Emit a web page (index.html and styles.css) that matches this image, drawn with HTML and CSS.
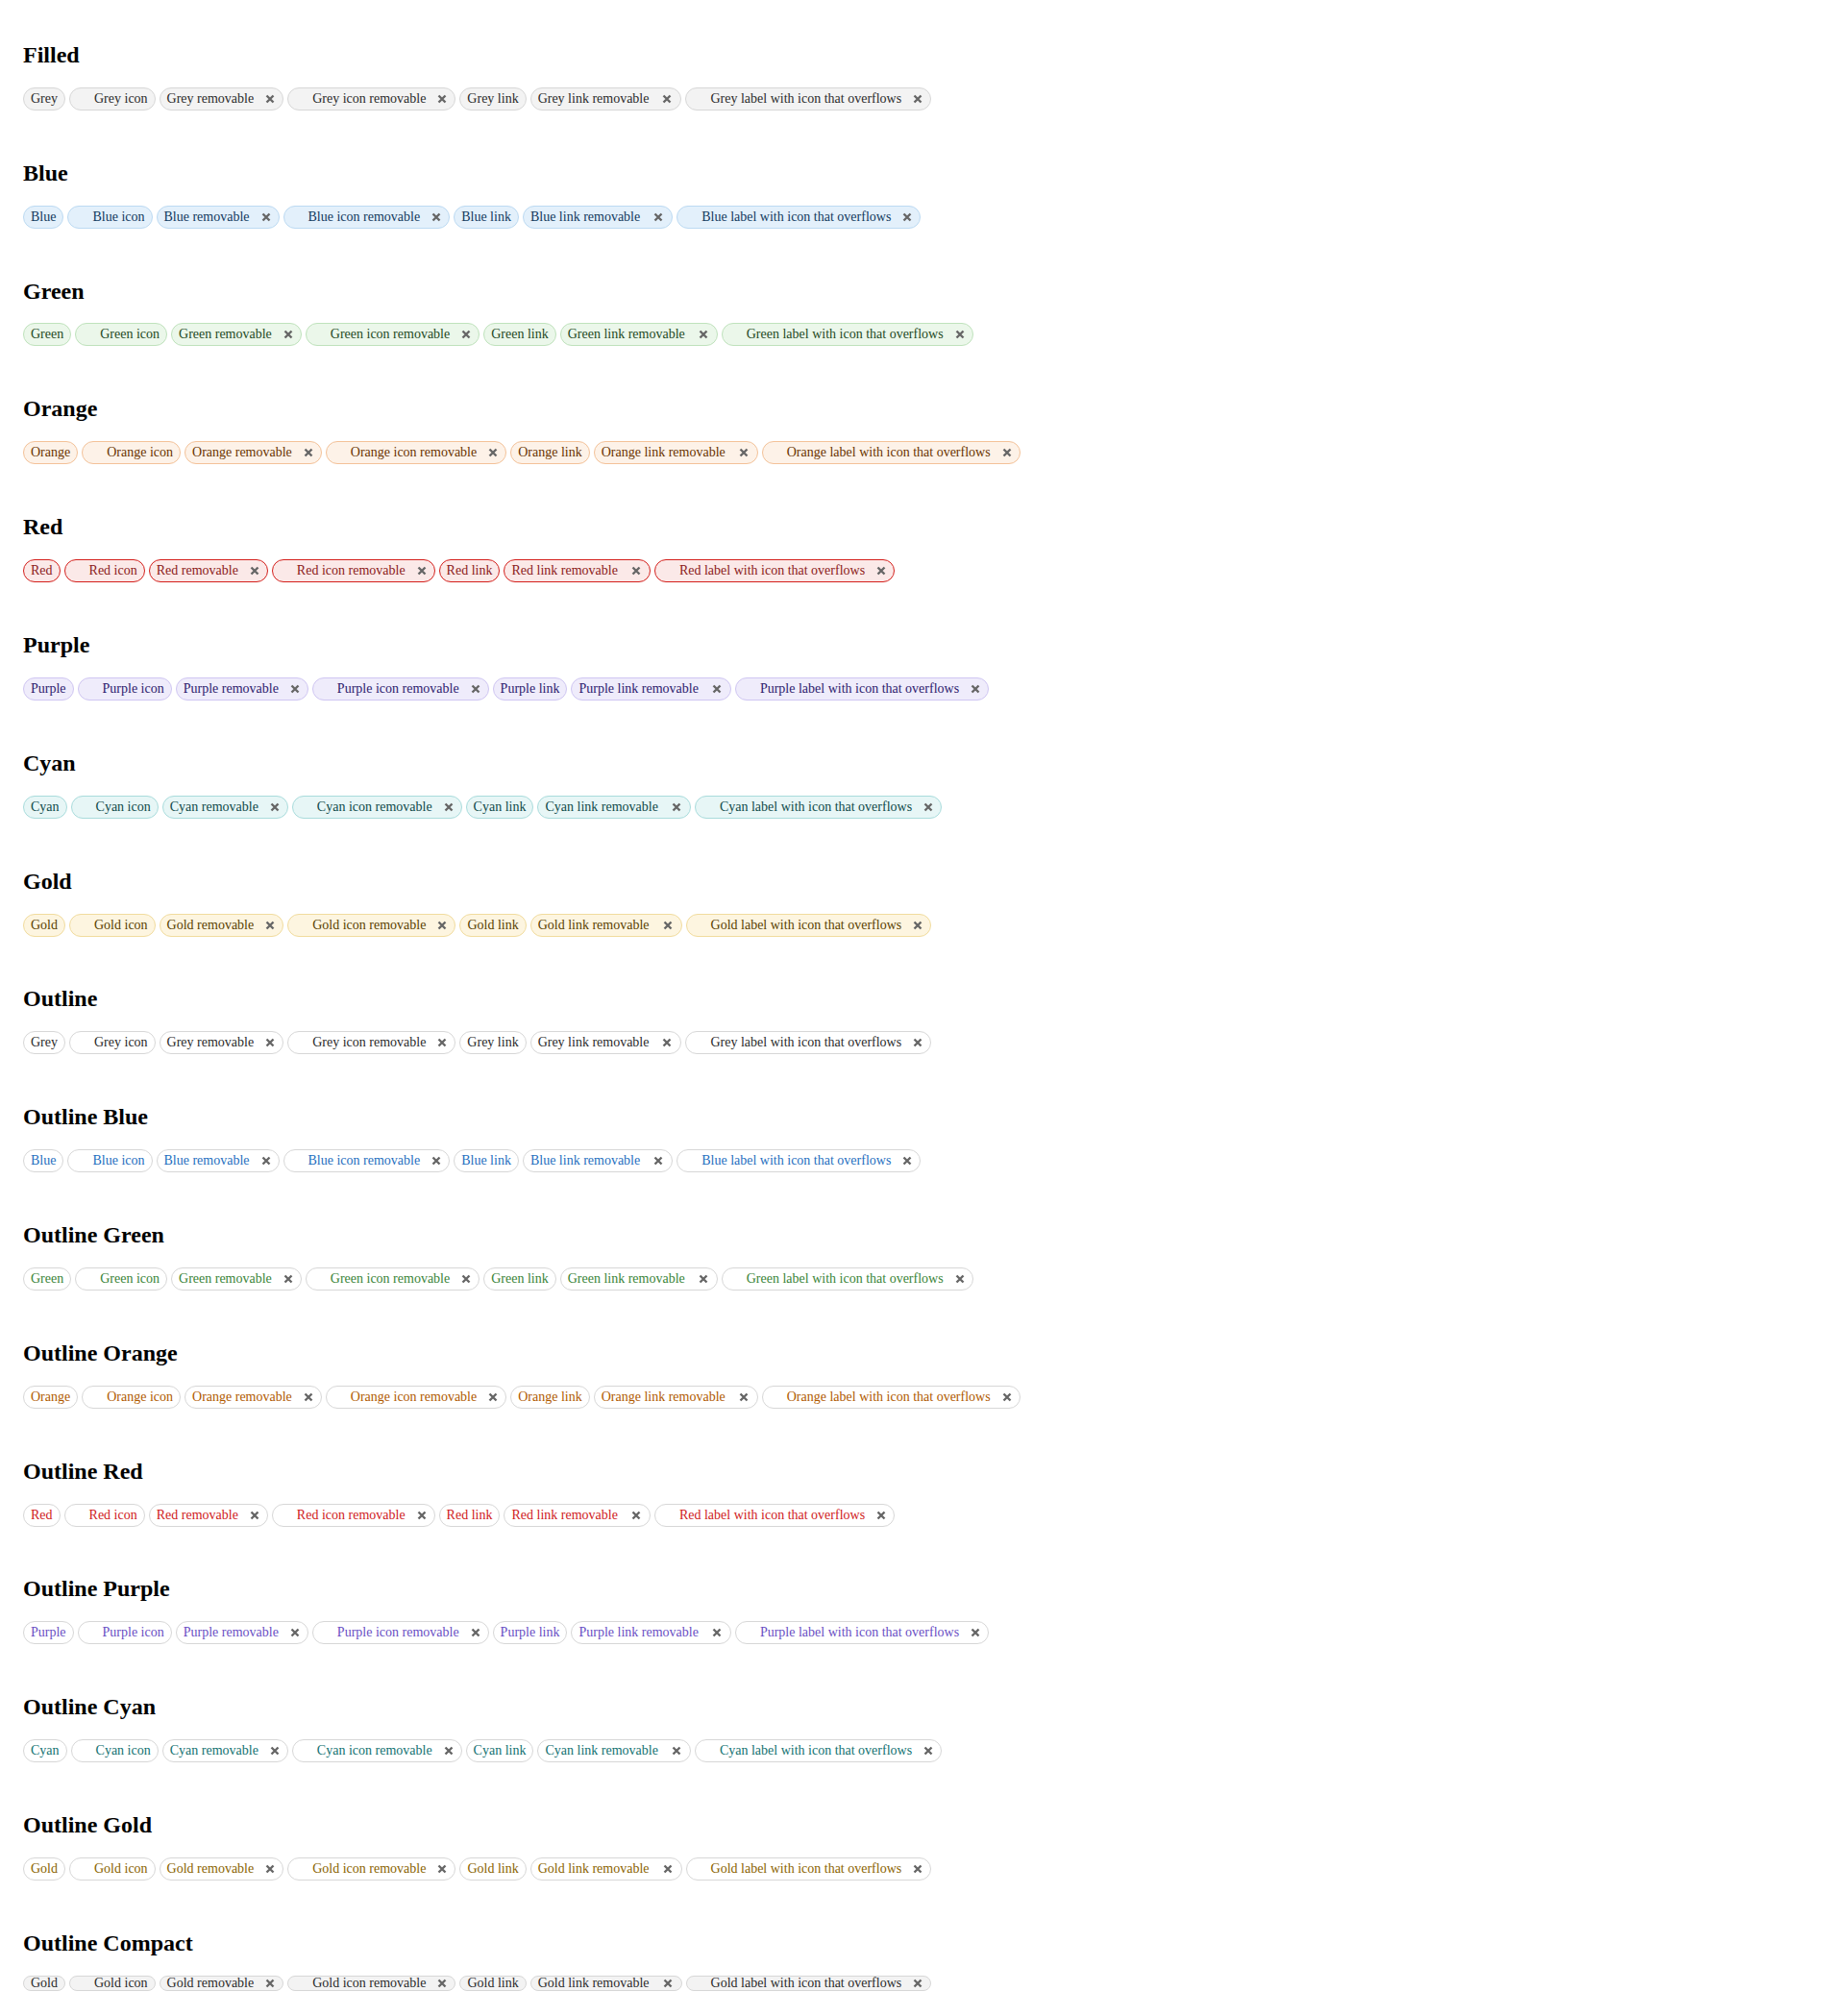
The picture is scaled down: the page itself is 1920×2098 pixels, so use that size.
FILE: index.html
```html
<!DOCTYPE html>
<html lang="en">
<head>
<meta charset="utf-8">
<title>Tags</title>
<link rel="stylesheet" href="styles.css">
</head>
<body>
<div class="page">

<section class="section">
<h2>Filled</h2>
<div class="tags">
<span class="tag grey"><span class="tag-label">Grey</span></span>
<span class="tag grey"><span class="tag-icon"></span><span class="tag-label">Grey icon</span></span>
<span class="tag grey"><span class="tag-label">Grey removable</span><button class="tag-close"><svg viewBox="0 0 10 10" width="10" height="10"><path d="M1.5 1.5L8.5 8.5M8.5 1.5L1.5 8.5"/></svg></button></span>
<span class="tag grey"><span class="tag-icon"></span><span class="tag-label">Grey icon removable</span><button class="tag-close"><svg viewBox="0 0 10 10" width="10" height="10"><path d="M1.5 1.5L8.5 8.5M8.5 1.5L1.5 8.5"/></svg></button></span>
<a class="tag grey" href="#"><span class="tag-label">Grey link</span></a>
<a class="tag grey link-rm" href="#"><span class="tag-label">Grey link removable</span><button class="tag-close"><svg viewBox="0 0 10 10" width="10" height="10"><path d="M1.5 1.5L8.5 8.5M8.5 1.5L1.5 8.5"/></svg></button></a>
<span class="tag grey"><span class="tag-icon"></span><span class="tag-label">Grey label with icon that overflows</span><button class="tag-close"><svg viewBox="0 0 10 10" width="10" height="10"><path d="M1.5 1.5L8.5 8.5M8.5 1.5L1.5 8.5"/></svg></button></span>
</div>
</section>

<section class="section">
<h2>Blue</h2>
<div class="tags">
<span class="tag blue"><span class="tag-label">Blue</span></span>
<span class="tag blue"><span class="tag-icon"></span><span class="tag-label">Blue icon</span></span>
<span class="tag blue"><span class="tag-label">Blue removable</span><button class="tag-close"><svg viewBox="0 0 10 10" width="10" height="10"><path d="M1.5 1.5L8.5 8.5M8.5 1.5L1.5 8.5"/></svg></button></span>
<span class="tag blue"><span class="tag-icon"></span><span class="tag-label">Blue icon removable</span><button class="tag-close"><svg viewBox="0 0 10 10" width="10" height="10"><path d="M1.5 1.5L8.5 8.5M8.5 1.5L1.5 8.5"/></svg></button></span>
<a class="tag blue" href="#"><span class="tag-label">Blue link</span></a>
<a class="tag blue link-rm" href="#"><span class="tag-label">Blue link removable</span><button class="tag-close"><svg viewBox="0 0 10 10" width="10" height="10"><path d="M1.5 1.5L8.5 8.5M8.5 1.5L1.5 8.5"/></svg></button></a>
<span class="tag blue"><span class="tag-icon"></span><span class="tag-label">Blue label with icon that overflows</span><button class="tag-close"><svg viewBox="0 0 10 10" width="10" height="10"><path d="M1.5 1.5L8.5 8.5M8.5 1.5L1.5 8.5"/></svg></button></span>
</div>
</section>

<section class="section">
<h2>Green</h2>
<div class="tags">
<span class="tag green"><span class="tag-label">Green</span></span>
<span class="tag green"><span class="tag-icon"></span><span class="tag-label">Green icon</span></span>
<span class="tag green"><span class="tag-label">Green removable</span><button class="tag-close"><svg viewBox="0 0 10 10" width="10" height="10"><path d="M1.5 1.5L8.5 8.5M8.5 1.5L1.5 8.5"/></svg></button></span>
<span class="tag green"><span class="tag-icon"></span><span class="tag-label">Green icon removable</span><button class="tag-close"><svg viewBox="0 0 10 10" width="10" height="10"><path d="M1.5 1.5L8.5 8.5M8.5 1.5L1.5 8.5"/></svg></button></span>
<a class="tag green" href="#"><span class="tag-label">Green link</span></a>
<a class="tag green link-rm" href="#"><span class="tag-label">Green link removable</span><button class="tag-close"><svg viewBox="0 0 10 10" width="10" height="10"><path d="M1.5 1.5L8.5 8.5M8.5 1.5L1.5 8.5"/></svg></button></a>
<span class="tag green"><span class="tag-icon"></span><span class="tag-label">Green label with icon that overflows</span><button class="tag-close"><svg viewBox="0 0 10 10" width="10" height="10"><path d="M1.5 1.5L8.5 8.5M8.5 1.5L1.5 8.5"/></svg></button></span>
</div>
</section>

<section class="section">
<h2>Orange</h2>
<div class="tags">
<span class="tag orange"><span class="tag-label">Orange</span></span>
<span class="tag orange"><span class="tag-icon"></span><span class="tag-label">Orange icon</span></span>
<span class="tag orange"><span class="tag-label">Orange removable</span><button class="tag-close"><svg viewBox="0 0 10 10" width="10" height="10"><path d="M1.5 1.5L8.5 8.5M8.5 1.5L1.5 8.5"/></svg></button></span>
<span class="tag orange"><span class="tag-icon"></span><span class="tag-label">Orange icon removable</span><button class="tag-close"><svg viewBox="0 0 10 10" width="10" height="10"><path d="M1.5 1.5L8.5 8.5M8.5 1.5L1.5 8.5"/></svg></button></span>
<a class="tag orange" href="#"><span class="tag-label">Orange link</span></a>
<a class="tag orange link-rm" href="#"><span class="tag-label">Orange link removable</span><button class="tag-close"><svg viewBox="0 0 10 10" width="10" height="10"><path d="M1.5 1.5L8.5 8.5M8.5 1.5L1.5 8.5"/></svg></button></a>
<span class="tag orange"><span class="tag-icon"></span><span class="tag-label">Orange label with icon that overflows</span><button class="tag-close"><svg viewBox="0 0 10 10" width="10" height="10"><path d="M1.5 1.5L8.5 8.5M8.5 1.5L1.5 8.5"/></svg></button></span>
</div>
</section>

<section class="section">
<h2>Red</h2>
<div class="tags">
<span class="tag red"><span class="tag-label">Red</span></span>
<span class="tag red"><span class="tag-icon"></span><span class="tag-label">Red icon</span></span>
<span class="tag red"><span class="tag-label">Red removable</span><button class="tag-close"><svg viewBox="0 0 10 10" width="10" height="10"><path d="M1.5 1.5L8.5 8.5M8.5 1.5L1.5 8.5"/></svg></button></span>
<span class="tag red"><span class="tag-icon"></span><span class="tag-label">Red icon removable</span><button class="tag-close"><svg viewBox="0 0 10 10" width="10" height="10"><path d="M1.5 1.5L8.5 8.5M8.5 1.5L1.5 8.5"/></svg></button></span>
<a class="tag red" href="#"><span class="tag-label">Red link</span></a>
<a class="tag red link-rm" href="#"><span class="tag-label">Red link removable</span><button class="tag-close"><svg viewBox="0 0 10 10" width="10" height="10"><path d="M1.5 1.5L8.5 8.5M8.5 1.5L1.5 8.5"/></svg></button></a>
<span class="tag red"><span class="tag-icon"></span><span class="tag-label">Red label with icon that overflows</span><button class="tag-close"><svg viewBox="0 0 10 10" width="10" height="10"><path d="M1.5 1.5L8.5 8.5M8.5 1.5L1.5 8.5"/></svg></button></span>
</div>
</section>

<section class="section">
<h2>Purple</h2>
<div class="tags">
<span class="tag purple"><span class="tag-label">Purple</span></span>
<span class="tag purple"><span class="tag-icon"></span><span class="tag-label">Purple icon</span></span>
<span class="tag purple"><span class="tag-label">Purple removable</span><button class="tag-close"><svg viewBox="0 0 10 10" width="10" height="10"><path d="M1.5 1.5L8.5 8.5M8.5 1.5L1.5 8.5"/></svg></button></span>
<span class="tag purple"><span class="tag-icon"></span><span class="tag-label">Purple icon removable</span><button class="tag-close"><svg viewBox="0 0 10 10" width="10" height="10"><path d="M1.5 1.5L8.5 8.5M8.5 1.5L1.5 8.5"/></svg></button></span>
<a class="tag purple" href="#"><span class="tag-label">Purple link</span></a>
<a class="tag purple link-rm" href="#"><span class="tag-label">Purple link removable</span><button class="tag-close"><svg viewBox="0 0 10 10" width="10" height="10"><path d="M1.5 1.5L8.5 8.5M8.5 1.5L1.5 8.5"/></svg></button></a>
<span class="tag purple"><span class="tag-icon"></span><span class="tag-label">Purple label with icon that overflows</span><button class="tag-close"><svg viewBox="0 0 10 10" width="10" height="10"><path d="M1.5 1.5L8.5 8.5M8.5 1.5L1.5 8.5"/></svg></button></span>
</div>
</section>

<section class="section">
<h2>Cyan</h2>
<div class="tags">
<span class="tag cyan"><span class="tag-label">Cyan</span></span>
<span class="tag cyan"><span class="tag-icon"></span><span class="tag-label">Cyan icon</span></span>
<span class="tag cyan"><span class="tag-label">Cyan removable</span><button class="tag-close"><svg viewBox="0 0 10 10" width="10" height="10"><path d="M1.5 1.5L8.5 8.5M8.5 1.5L1.5 8.5"/></svg></button></span>
<span class="tag cyan"><span class="tag-icon"></span><span class="tag-label">Cyan icon removable</span><button class="tag-close"><svg viewBox="0 0 10 10" width="10" height="10"><path d="M1.5 1.5L8.5 8.5M8.5 1.5L1.5 8.5"/></svg></button></span>
<a class="tag cyan" href="#"><span class="tag-label">Cyan link</span></a>
<a class="tag cyan link-rm" href="#"><span class="tag-label">Cyan link removable</span><button class="tag-close"><svg viewBox="0 0 10 10" width="10" height="10"><path d="M1.5 1.5L8.5 8.5M8.5 1.5L1.5 8.5"/></svg></button></a>
<span class="tag cyan"><span class="tag-icon"></span><span class="tag-label">Cyan label with icon that overflows</span><button class="tag-close"><svg viewBox="0 0 10 10" width="10" height="10"><path d="M1.5 1.5L8.5 8.5M8.5 1.5L1.5 8.5"/></svg></button></span>
</div>
</section>

<section class="section">
<h2>Gold</h2>
<div class="tags">
<span class="tag gold"><span class="tag-label">Gold</span></span>
<span class="tag gold"><span class="tag-icon"></span><span class="tag-label">Gold icon</span></span>
<span class="tag gold"><span class="tag-label">Gold removable</span><button class="tag-close"><svg viewBox="0 0 10 10" width="10" height="10"><path d="M1.5 1.5L8.5 8.5M8.5 1.5L1.5 8.5"/></svg></button></span>
<span class="tag gold"><span class="tag-icon"></span><span class="tag-label">Gold icon removable</span><button class="tag-close"><svg viewBox="0 0 10 10" width="10" height="10"><path d="M1.5 1.5L8.5 8.5M8.5 1.5L1.5 8.5"/></svg></button></span>
<a class="tag gold" href="#"><span class="tag-label">Gold link</span></a>
<a class="tag gold link-rm" href="#"><span class="tag-label">Gold link removable</span><button class="tag-close"><svg viewBox="0 0 10 10" width="10" height="10"><path d="M1.5 1.5L8.5 8.5M8.5 1.5L1.5 8.5"/></svg></button></a>
<span class="tag gold"><span class="tag-icon"></span><span class="tag-label">Gold label with icon that overflows</span><button class="tag-close"><svg viewBox="0 0 10 10" width="10" height="10"><path d="M1.5 1.5L8.5 8.5M8.5 1.5L1.5 8.5"/></svg></button></span>
</div>
</section>

<section class="section">
<h2>Outline</h2>
<div class="tags">
<span class="tag outline o-grey"><span class="tag-label">Grey</span></span>
<span class="tag outline o-grey"><span class="tag-icon"></span><span class="tag-label">Grey icon</span></span>
<span class="tag outline o-grey"><span class="tag-label">Grey removable</span><button class="tag-close"><svg viewBox="0 0 10 10" width="10" height="10"><path d="M1.5 1.5L8.5 8.5M8.5 1.5L1.5 8.5"/></svg></button></span>
<span class="tag outline o-grey"><span class="tag-icon"></span><span class="tag-label">Grey icon removable</span><button class="tag-close"><svg viewBox="0 0 10 10" width="10" height="10"><path d="M1.5 1.5L8.5 8.5M8.5 1.5L1.5 8.5"/></svg></button></span>
<a class="tag outline o-grey" href="#"><span class="tag-label">Grey link</span></a>
<a class="tag outline o-grey link-rm" href="#"><span class="tag-label">Grey link removable</span><button class="tag-close"><svg viewBox="0 0 10 10" width="10" height="10"><path d="M1.5 1.5L8.5 8.5M8.5 1.5L1.5 8.5"/></svg></button></a>
<span class="tag outline o-grey"><span class="tag-icon"></span><span class="tag-label">Grey label with icon that overflows</span><button class="tag-close"><svg viewBox="0 0 10 10" width="10" height="10"><path d="M1.5 1.5L8.5 8.5M8.5 1.5L1.5 8.5"/></svg></button></span>
</div>
</section>

<section class="section">
<h2>Outline Blue</h2>
<div class="tags">
<span class="tag outline o-blue"><span class="tag-label">Blue</span></span>
<span class="tag outline o-blue"><span class="tag-icon"></span><span class="tag-label">Blue icon</span></span>
<span class="tag outline o-blue"><span class="tag-label">Blue removable</span><button class="tag-close"><svg viewBox="0 0 10 10" width="10" height="10"><path d="M1.5 1.5L8.5 8.5M8.5 1.5L1.5 8.5"/></svg></button></span>
<span class="tag outline o-blue"><span class="tag-icon"></span><span class="tag-label">Blue icon removable</span><button class="tag-close"><svg viewBox="0 0 10 10" width="10" height="10"><path d="M1.5 1.5L8.5 8.5M8.5 1.5L1.5 8.5"/></svg></button></span>
<a class="tag outline o-blue" href="#"><span class="tag-label">Blue link</span></a>
<a class="tag outline o-blue link-rm" href="#"><span class="tag-label">Blue link removable</span><button class="tag-close"><svg viewBox="0 0 10 10" width="10" height="10"><path d="M1.5 1.5L8.5 8.5M8.5 1.5L1.5 8.5"/></svg></button></a>
<span class="tag outline o-blue"><span class="tag-icon"></span><span class="tag-label">Blue label with icon that overflows</span><button class="tag-close"><svg viewBox="0 0 10 10" width="10" height="10"><path d="M1.5 1.5L8.5 8.5M8.5 1.5L1.5 8.5"/></svg></button></span>
</div>
</section>

<section class="section">
<h2>Outline Green</h2>
<div class="tags">
<span class="tag outline o-green"><span class="tag-label">Green</span></span>
<span class="tag outline o-green"><span class="tag-icon"></span><span class="tag-label">Green icon</span></span>
<span class="tag outline o-green"><span class="tag-label">Green removable</span><button class="tag-close"><svg viewBox="0 0 10 10" width="10" height="10"><path d="M1.5 1.5L8.5 8.5M8.5 1.5L1.5 8.5"/></svg></button></span>
<span class="tag outline o-green"><span class="tag-icon"></span><span class="tag-label">Green icon removable</span><button class="tag-close"><svg viewBox="0 0 10 10" width="10" height="10"><path d="M1.5 1.5L8.5 8.5M8.5 1.5L1.5 8.5"/></svg></button></span>
<a class="tag outline o-green" href="#"><span class="tag-label">Green link</span></a>
<a class="tag outline o-green link-rm" href="#"><span class="tag-label">Green link removable</span><button class="tag-close"><svg viewBox="0 0 10 10" width="10" height="10"><path d="M1.5 1.5L8.5 8.5M8.5 1.5L1.5 8.5"/></svg></button></a>
<span class="tag outline o-green"><span class="tag-icon"></span><span class="tag-label">Green label with icon that overflows</span><button class="tag-close"><svg viewBox="0 0 10 10" width="10" height="10"><path d="M1.5 1.5L8.5 8.5M8.5 1.5L1.5 8.5"/></svg></button></span>
</div>
</section>

<section class="section">
<h2>Outline Orange</h2>
<div class="tags">
<span class="tag outline o-orange"><span class="tag-label">Orange</span></span>
<span class="tag outline o-orange"><span class="tag-icon"></span><span class="tag-label">Orange icon</span></span>
<span class="tag outline o-orange"><span class="tag-label">Orange removable</span><button class="tag-close"><svg viewBox="0 0 10 10" width="10" height="10"><path d="M1.5 1.5L8.5 8.5M8.5 1.5L1.5 8.5"/></svg></button></span>
<span class="tag outline o-orange"><span class="tag-icon"></span><span class="tag-label">Orange icon removable</span><button class="tag-close"><svg viewBox="0 0 10 10" width="10" height="10"><path d="M1.5 1.5L8.5 8.5M8.5 1.5L1.5 8.5"/></svg></button></span>
<a class="tag outline o-orange" href="#"><span class="tag-label">Orange link</span></a>
<a class="tag outline o-orange link-rm" href="#"><span class="tag-label">Orange link removable</span><button class="tag-close"><svg viewBox="0 0 10 10" width="10" height="10"><path d="M1.5 1.5L8.5 8.5M8.5 1.5L1.5 8.5"/></svg></button></a>
<span class="tag outline o-orange"><span class="tag-icon"></span><span class="tag-label">Orange label with icon that overflows</span><button class="tag-close"><svg viewBox="0 0 10 10" width="10" height="10"><path d="M1.5 1.5L8.5 8.5M8.5 1.5L1.5 8.5"/></svg></button></span>
</div>
</section>

<section class="section">
<h2>Outline Red</h2>
<div class="tags">
<span class="tag outline o-red"><span class="tag-label">Red</span></span>
<span class="tag outline o-red"><span class="tag-icon"></span><span class="tag-label">Red icon</span></span>
<span class="tag outline o-red"><span class="tag-label">Red removable</span><button class="tag-close"><svg viewBox="0 0 10 10" width="10" height="10"><path d="M1.5 1.5L8.5 8.5M8.5 1.5L1.5 8.5"/></svg></button></span>
<span class="tag outline o-red"><span class="tag-icon"></span><span class="tag-label">Red icon removable</span><button class="tag-close"><svg viewBox="0 0 10 10" width="10" height="10"><path d="M1.5 1.5L8.5 8.5M8.5 1.5L1.5 8.5"/></svg></button></span>
<a class="tag outline o-red" href="#"><span class="tag-label">Red link</span></a>
<a class="tag outline o-red link-rm" href="#"><span class="tag-label">Red link removable</span><button class="tag-close"><svg viewBox="0 0 10 10" width="10" height="10"><path d="M1.5 1.5L8.5 8.5M8.5 1.5L1.5 8.5"/></svg></button></a>
<span class="tag outline o-red"><span class="tag-icon"></span><span class="tag-label">Red label with icon that overflows</span><button class="tag-close"><svg viewBox="0 0 10 10" width="10" height="10"><path d="M1.5 1.5L8.5 8.5M8.5 1.5L1.5 8.5"/></svg></button></span>
</div>
</section>

<section class="section">
<h2>Outline Purple</h2>
<div class="tags">
<span class="tag outline o-purple"><span class="tag-label">Purple</span></span>
<span class="tag outline o-purple"><span class="tag-icon"></span><span class="tag-label">Purple icon</span></span>
<span class="tag outline o-purple"><span class="tag-label">Purple removable</span><button class="tag-close"><svg viewBox="0 0 10 10" width="10" height="10"><path d="M1.5 1.5L8.5 8.5M8.5 1.5L1.5 8.5"/></svg></button></span>
<span class="tag outline o-purple"><span class="tag-icon"></span><span class="tag-label">Purple icon removable</span><button class="tag-close"><svg viewBox="0 0 10 10" width="10" height="10"><path d="M1.5 1.5L8.5 8.5M8.5 1.5L1.5 8.5"/></svg></button></span>
<a class="tag outline o-purple" href="#"><span class="tag-label">Purple link</span></a>
<a class="tag outline o-purple link-rm" href="#"><span class="tag-label">Purple link removable</span><button class="tag-close"><svg viewBox="0 0 10 10" width="10" height="10"><path d="M1.5 1.5L8.5 8.5M8.5 1.5L1.5 8.5"/></svg></button></a>
<span class="tag outline o-purple"><span class="tag-icon"></span><span class="tag-label">Purple label with icon that overflows</span><button class="tag-close"><svg viewBox="0 0 10 10" width="10" height="10"><path d="M1.5 1.5L8.5 8.5M8.5 1.5L1.5 8.5"/></svg></button></span>
</div>
</section>

<section class="section">
<h2>Outline Cyan</h2>
<div class="tags">
<span class="tag outline o-cyan"><span class="tag-label">Cyan</span></span>
<span class="tag outline o-cyan"><span class="tag-icon"></span><span class="tag-label">Cyan icon</span></span>
<span class="tag outline o-cyan"><span class="tag-label">Cyan removable</span><button class="tag-close"><svg viewBox="0 0 10 10" width="10" height="10"><path d="M1.5 1.5L8.5 8.5M8.5 1.5L1.5 8.5"/></svg></button></span>
<span class="tag outline o-cyan"><span class="tag-icon"></span><span class="tag-label">Cyan icon removable</span><button class="tag-close"><svg viewBox="0 0 10 10" width="10" height="10"><path d="M1.5 1.5L8.5 8.5M8.5 1.5L1.5 8.5"/></svg></button></span>
<a class="tag outline o-cyan" href="#"><span class="tag-label">Cyan link</span></a>
<a class="tag outline o-cyan link-rm" href="#"><span class="tag-label">Cyan link removable</span><button class="tag-close"><svg viewBox="0 0 10 10" width="10" height="10"><path d="M1.5 1.5L8.5 8.5M8.5 1.5L1.5 8.5"/></svg></button></a>
<span class="tag outline o-cyan"><span class="tag-icon"></span><span class="tag-label">Cyan label with icon that overflows</span><button class="tag-close"><svg viewBox="0 0 10 10" width="10" height="10"><path d="M1.5 1.5L8.5 8.5M8.5 1.5L1.5 8.5"/></svg></button></span>
</div>
</section>

<section class="section">
<h2>Outline Gold</h2>
<div class="tags">
<span class="tag outline o-gold"><span class="tag-label">Gold</span></span>
<span class="tag outline o-gold"><span class="tag-icon"></span><span class="tag-label">Gold icon</span></span>
<span class="tag outline o-gold"><span class="tag-label">Gold removable</span><button class="tag-close"><svg viewBox="0 0 10 10" width="10" height="10"><path d="M1.5 1.5L8.5 8.5M8.5 1.5L1.5 8.5"/></svg></button></span>
<span class="tag outline o-gold"><span class="tag-icon"></span><span class="tag-label">Gold icon removable</span><button class="tag-close"><svg viewBox="0 0 10 10" width="10" height="10"><path d="M1.5 1.5L8.5 8.5M8.5 1.5L1.5 8.5"/></svg></button></span>
<a class="tag outline o-gold" href="#"><span class="tag-label">Gold link</span></a>
<a class="tag outline o-gold link-rm" href="#"><span class="tag-label">Gold link removable</span><button class="tag-close"><svg viewBox="0 0 10 10" width="10" height="10"><path d="M1.5 1.5L8.5 8.5M8.5 1.5L1.5 8.5"/></svg></button></a>
<span class="tag outline o-gold"><span class="tag-icon"></span><span class="tag-label">Gold label with icon that overflows</span><button class="tag-close"><svg viewBox="0 0 10 10" width="10" height="10"><path d="M1.5 1.5L8.5 8.5M8.5 1.5L1.5 8.5"/></svg></button></span>
</div>
</section>

<section class="section">
<h2>Outline Compact</h2>
<div class="tags">
<span class="tag grey compact"><span class="tag-label">Gold</span></span>
<span class="tag grey compact"><span class="tag-icon"></span><span class="tag-label">Gold icon</span></span>
<span class="tag grey compact"><span class="tag-label">Gold removable</span><button class="tag-close"><svg viewBox="0 0 10 10" width="10" height="10"><path d="M1.5 1.5L8.5 8.5M8.5 1.5L1.5 8.5"/></svg></button></span>
<span class="tag grey compact"><span class="tag-icon"></span><span class="tag-label">Gold icon removable</span><button class="tag-close"><svg viewBox="0 0 10 10" width="10" height="10"><path d="M1.5 1.5L8.5 8.5M8.5 1.5L1.5 8.5"/></svg></button></span>
<a class="tag grey compact" href="#"><span class="tag-label">Gold link</span></a>
<a class="tag grey compact link-rm" href="#"><span class="tag-label">Gold link removable</span><button class="tag-close"><svg viewBox="0 0 10 10" width="10" height="10"><path d="M1.5 1.5L8.5 8.5M8.5 1.5L1.5 8.5"/></svg></button></a>
<span class="tag grey compact"><span class="tag-icon"></span><span class="tag-label">Gold label with icon that overflows</span><button class="tag-close"><svg viewBox="0 0 10 10" width="10" height="10"><path d="M1.5 1.5L8.5 8.5M8.5 1.5L1.5 8.5"/></svg></button></span>
</div>
</section>

</div>
</body>
</html>
```

FILE: styles.css
```css
body {
  margin: 8px;
  font-family: "Liberation Serif", "Times New Roman", serif;
  color: #000;
  background: #fff;
}

.page {
  padding: 16px;
}

.section {
  display: flow-root;
  margin-bottom: 32px;
}

.section h2 {
  font-size: 24px;
  font-weight: bold;
  margin: 19.92px 0;
}

.tags {
  display: flex;
  flex-wrap: wrap;
  gap: 4px;
}

.tag {
  display: inline-flex;
  align-items: center;
  box-sizing: border-box;
  height: 24px;
  padding: 0 7px;
  border: 1px solid;
  border-radius: 12px;
  font-size: 14px;
  line-height: 16px;
  white-space: nowrap;
  text-decoration: none;
}

.tag-icon {
  display: inline-block;
  width: 14px;
  height: 14px;
  margin-right: 4px;
}

.tag-close {
  display: inline-flex;
  align-items: center;
  justify-content: center;
  width: 18px;
  height: 18px;
  margin: 0 -3px 0 8px;
  padding: 0;
  border: 0;
  background: transparent;
  color: #666;
  cursor: pointer;
}

.link-rm .tag-close {
  margin-left: 10px;
  margin-right: -2px;
}

.tag-close svg path {
  stroke: currentColor;
  stroke-width: 2.4;
  fill: none;
}

/* Filled variants */
.grey   { background: #f3f3f3; border-color: #d7d7d7; color: #2b2b2b; }
.blue   { background: #e3f0fb; border-color: #bcdaf2; color: #123a5e; }
.green  { background: #ebf7ea; border-color: #bfe2bc; color: #1f4a1f; }
.orange { background: #fdf2e8; border-color: #f3c299; color: #6a3400; }
.red    { background: #fbe9e8; border-color: #d4201c; color: #8b1a1a; }
.purple { background: #efecfb; border-color: #cfc6f2; color: #2e1b6e; }
.cyan   { background: #e7f6f6; border-color: #a9dcdc; color: #0f4a4a; }
.gold   { background: #fdf5e0; border-color: #f1dc9e; color: #5a4200; }

/* Outline variants */
.outline { background: #fff; border-color: #d7d7d7; }
.o-grey   { color: #2b2b2b; }
.o-blue   { color: #1f6fc0; }
.o-green  { color: #3a8438; }
.o-orange { color: #b05a00; }
.o-red    { color: #d0211c; }
.o-purple { color: #6a4fc4; }
.o-cyan   { color: #137272; }
.o-gold   { color: #8a6300; }

/* Compact */
.compact {
  height: 16px;
  border-radius: 8px;
}

.compact .tag-close {
  height: 14px;
}
```
